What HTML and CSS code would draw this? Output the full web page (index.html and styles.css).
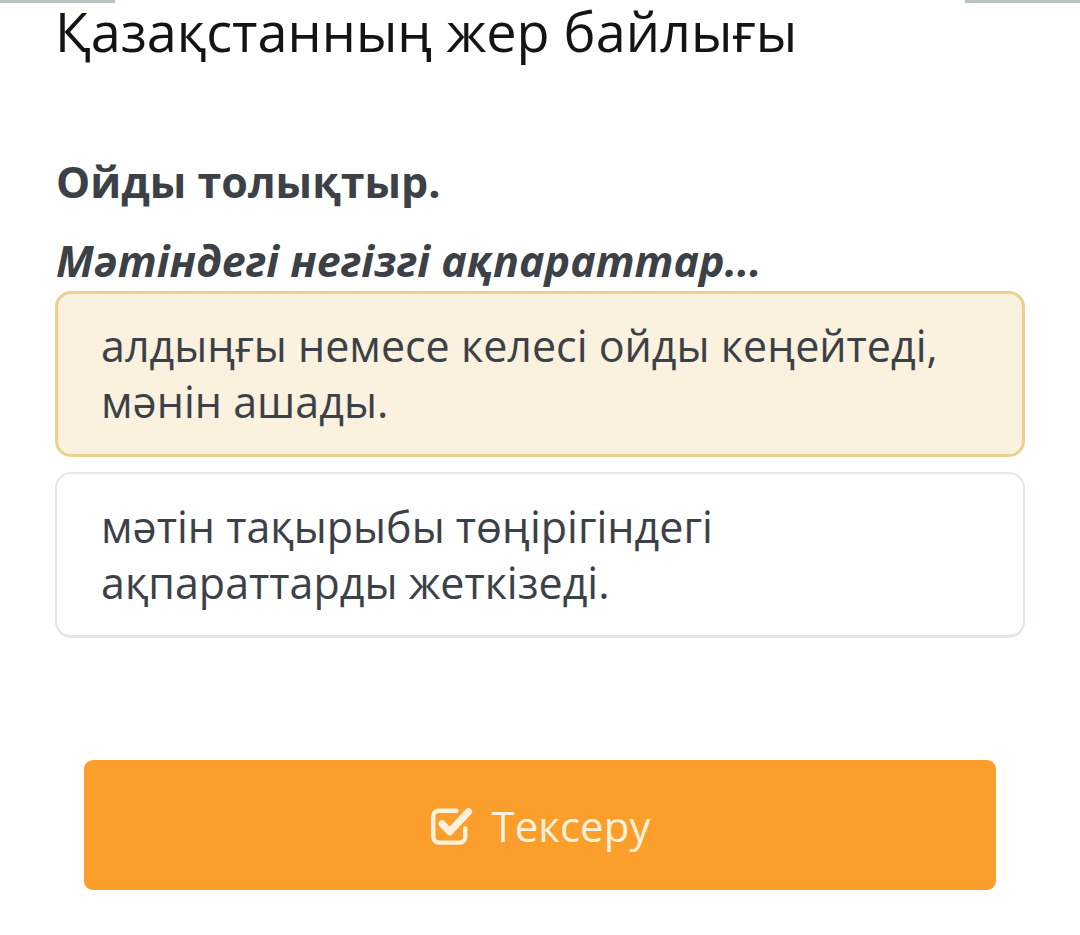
FILE: index.html
```html
<!DOCTYPE html>
<html lang="kk">
<head>
<meta charset="utf-8">
<title>Қазақстанның жер байлығы</title>
<link rel="stylesheet" href="styles.css">
</head>
<body>
<div class="topbar"><span class="tick"></span><span class="tick"></span></div>
<h1 class="title">Қазақстанның жер байлығы</h1>
<main class="content">
  <p class="task">Ойды толықтыр.</p>
  <p class="prompt">Мәтіндегі негізгі ақпараттар...</p>
  <div class="options">
    <div class="option selected">алдыңғы немесе келесі ойды кеңейтеді, мәнін ашады.</div>
    <div class="option">мәтін тақырыбы төңірігіндегі ақпараттарды жеткізеді.</div>
  </div>
</main>
<div class="actions">
  <button class="check-btn" type="button">
    <svg class="check-icon" viewBox="0 0 40 40" width="44" height="44" aria-hidden="true">
      <path d="M32 23v8a5 5 0 0 1-5 5H8a5 5 0 0 1-5-5V12a5 5 0 0 1 5-5h16" fill="none" stroke="currentColor" stroke-width="4" stroke-linecap="round"/>
      <path d="M11 19l7 7L35 8" fill="none" stroke="currentColor" stroke-width="6.5" stroke-linecap="round" stroke-linejoin="round"/>
    </svg>
    <span>Тексеру</span>
  </button>
</div>
</body>
</html>
```
FILE: styles.css
```css
html, body {
  margin: 0;
  padding: 0;
  background: #ffffff;
}
body {
  font-family: "Open Sans", "Noto Sans", sans-serif;
  color: #3c4047;
  width: 1080px;
  height: 935px;
  overflow: hidden;
}
.topbar {
  display: flex;
  justify-content: space-between;
  height: 3px;
}
.tick {
  width: 115px;
  background: #b7c3c5;
}
.title {
  margin: -3px 0 0 55px;
  font-size: 54px;
  line-height: 62px;
  font-weight: 400;
  color: #141414;
}
.content {
  padding: 0 55px;
}
.task {
  margin: 94px 0 0 1px;
  font-size: 43px;
  line-height: 52px;
  font-weight: 700;
}
.prompt {
  margin: 27px 0 0 1px;
  font-size: 43px;
  line-height: 52px;
  font-weight: 700;
  font-style: italic;
}
.options {
  display: flex;
  flex-direction: column;
  gap: 15px;
  margin-top: 4px;
}
.option {
  box-sizing: border-box;
  height: 166px;
  border: 2px solid #e2e6e7;
  border-bottom-width: 3px;
  border-radius: 16px;
  background: #ffffff;
  padding: 25px 40px 0 44px;
  font-size: 43px;
  line-height: 56px;
}
.option.selected {
  border: 3px solid #ebd08e;
  background: #faf1de;
  padding: 24px 39px 0 43px;
}
.actions {
  padding: 0 84px;
  margin-top: 122px;
}
.check-btn {
  display: flex;
  align-items: center;
  justify-content: center;
  gap: 18px;
  width: 100%;
  height: 130px;
  border: none;
  border-radius: 9px;
  background: #fb9e2c;
  color: #fdf1dc;
  font-family: inherit;
  font-size: 42px;
  padding: 0;
}
.check-icon {
  width: 44px;
  height: 44px;
}
```
